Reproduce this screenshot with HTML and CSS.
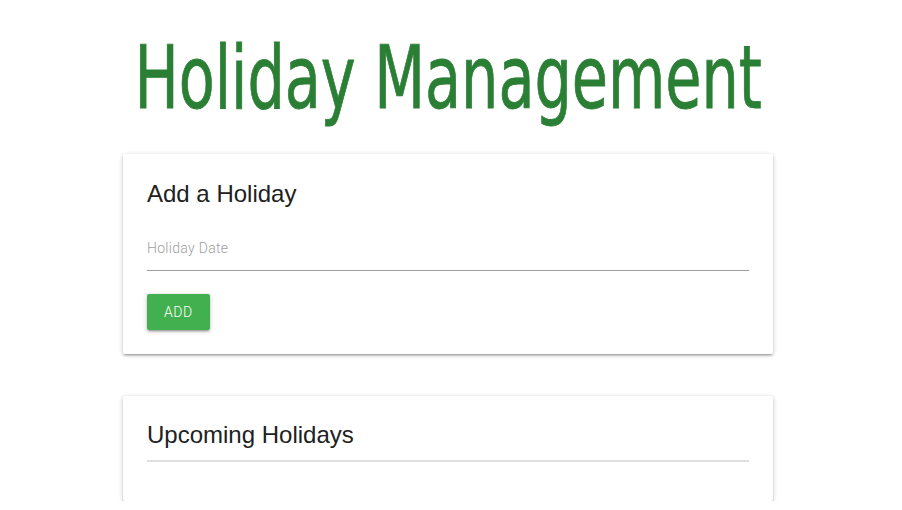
FILE: index.html
```html
<!DOCTYPE html>
<html>
<head>
<meta charset="utf-8">
<link rel="stylesheet" href="styles.css">
</head>
<body>
<div class="page">
  <h1 class="title">Holiday Management</h1>
  <div class="card">
    <h2 class="card-title">Add a Holiday</h2>
    <div class="field">
      <label class="field-label">Holiday Date</label>
      <div class="field-line"></div>
    </div>
    <button class="btn">ADD</button>
  </div>
  <div class="card card-list">
    <h2 class="card-title">Upcoming Holidays</h2>
    <div class="divider"></div>
  </div>
</div>
</body>
</html>
```
FILE: styles.css
```css
html, body {
  margin: 0;
  padding: 0;
  background: #fff;
}
.page {
  display: flex;
  flex-direction: column;
  align-items: center;
  padding-right: 6px;
  font-family: Roboto, "Liberation Sans", sans-serif;
}
.title {
  margin: 0;
  padding-top: 34px;
  height: 154px;
  box-sizing: border-box;
  font-family: "DejaVu Sans Condensed", "DejaVu Sans", sans-serif;
  font-stretch: condensed;
  font-weight: normal;
  font-size: 88px;
  line-height: 88px;
  color: #2a7f35;
  -webkit-text-stroke: 0.8px #2a7f35;
  white-space: nowrap;
  transform: scaleX(0.743);
}
.card {
  width: 650px;
  box-sizing: border-box;
  padding: 27px 24px 24px;
  background: #fff;
  border-radius: 2px;
  box-shadow: 0 2px 2px 0 rgba(0,0,0,.14), 0 3px 1px -2px rgba(0,0,0,.12), 0 1px 5px 0 rgba(0,0,0,.2);
  display: flex;
  flex-direction: column;
}
.card-title {
  margin: 0;
  font-family: "Liberation Sans", Arial, sans-serif;
  font-size: 24px;
  font-weight: normal;
  line-height: 26px;
  color: #212121;
}
.field {
  margin-top: 31px;
  display: flex;
  flex-direction: column;
}
.field-label {
  font-size: 14px;
  font-weight: 300;
  letter-spacing: 0.3px;
  color: #9e9e9e;
  line-height: 20px;
}
.field-line {
  margin-top: 12px;
  height: 1px;
  background: #9e9e9e;
}
.btn {
  align-self: flex-start;
  margin-top: 23px;
  height: 36px;
  padding: 0 17px;
  border: none;
  border-radius: 2px;
  background: #43b050;
  color: #fff;
  font-family: Roboto, "Liberation Sans", sans-serif;
  font-size: 14px;
  font-weight: 300;
  letter-spacing: 0.6px;
  box-shadow: 0 2px 2px 0 rgba(0,0,0,.14), 0 3px 1px -2px rgba(0,0,0,.12), 0 1px 5px 0 rgba(0,0,0,.2);
}
.card-list {
  margin-top: 42px;
  padding-top: 26px;
  padding-bottom: 39px;
}
.divider {
  margin-top: 12px;
  height: 2px;
  background: #e0e0e0;
}
```
